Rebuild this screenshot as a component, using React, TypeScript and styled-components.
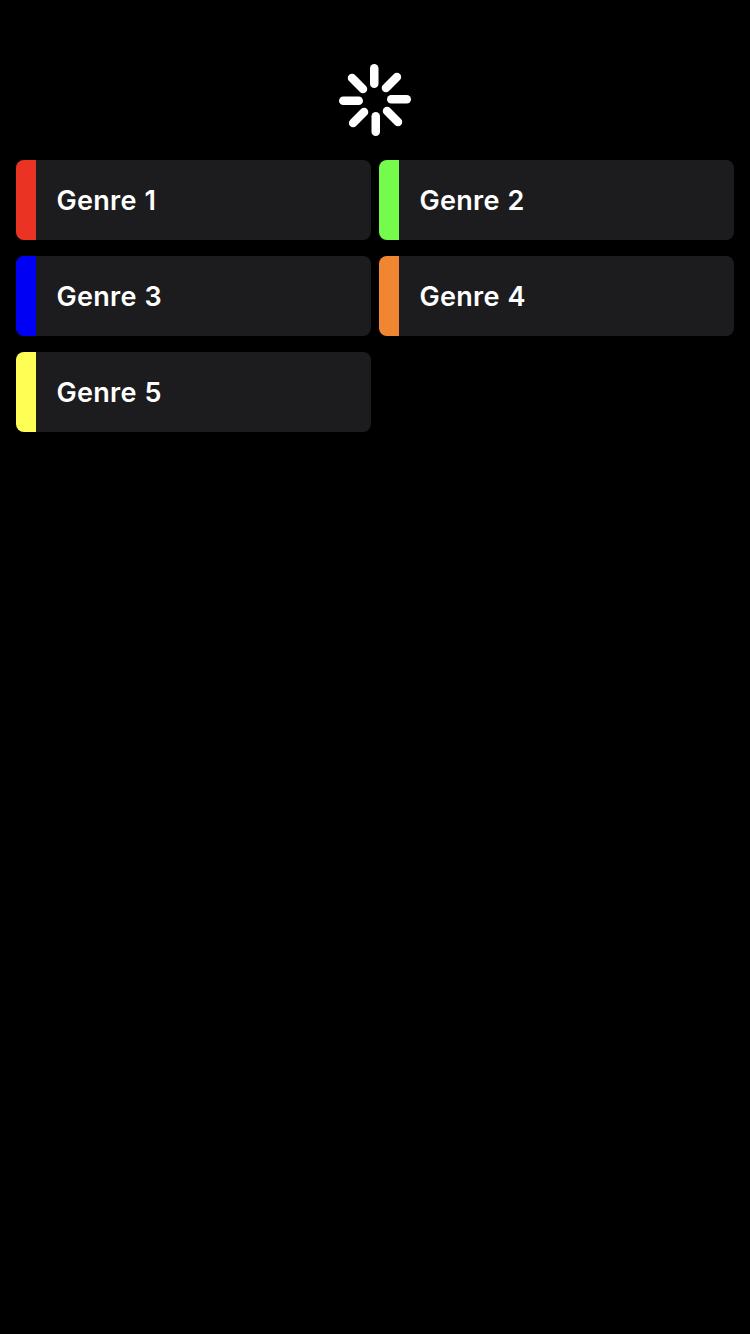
import React from "react";
import styled, { createGlobalStyle } from "styled-components";

const GlobalStyle = createGlobalStyle`
  * { box-sizing: border-box; }
  body { margin: 0; background: #000; }
`;

const Screen = styled.main`
  min-height: 1334px;
  padding: 64px 16px 0;
  background: #000;
  font-family: Inter, "Liberation Sans", sans-serif;
`;

const SpinnerRow = styled.header`
  display: flex;
  justify-content: center;
  margin-bottom: 24px;
`;

const Spinner = styled.svg`
  display: block;
  width: 72px;
  height: 72px;
`;

const GenreGrid = styled.section`
  display: grid;
  grid-template-columns: 1fr 1fr;
  column-gap: 8px;
  row-gap: 16px;
`;

const GenreCard = styled.article`
  display: flex;
  align-items: center;
  height: 80px;
  border-radius: 8px;
  overflow: hidden;
  background: #1c1c1e;
`;

const Stripe = styled.span<{ $color: string }>`
  width: 20px;
  height: 100%;
  margin-right: 20px;
  background: ${(p) => p.$color};
`;

const GenreName = styled.span`
  padding: 1px 0 0 0.4px;
  color: #fff;
  font-size: 27px;
  font-weight: 600;
  line-height: 34px;
  letter-spacing: 0.32px;
  word-spacing: 0.5px;
`;

const genres = [
  { name: "Genre 1", color: "#eb3323" },
  { name: "Genre 2", color: "#75fb4c" },
  { name: "Genre 3", color: "#0000f5" },
  { name: "Genre 4", color: "#f08632" },
  { name: "Genre 5", color: "#fffe54" },
];

const spokes = [0, 45, 90, 135, 180, 225, 270, 315];

export default function App() {
  return (
    <Screen>
      <GlobalStyle />
      <SpinnerRow>
        <Spinner viewBox="0 0 72 72" aria-label="Loading">
          {spokes.map((angle) => (
            <rect key={angle} x="31" y="0" width="8.5" height="24" rx="4.25" fill="#fff" transform={`rotate(${angle} 36 36)`} />
          ))}
        </Spinner>
      </SpinnerRow>
      <GenreGrid>
        {genres.map((g) => (
          <GenreCard key={g.name}>
            <Stripe $color={g.color} />
            <GenreName>{g.name}</GenreName>
          </GenreCard>
        ))}
      </GenreGrid>
    </Screen>
  );
}
